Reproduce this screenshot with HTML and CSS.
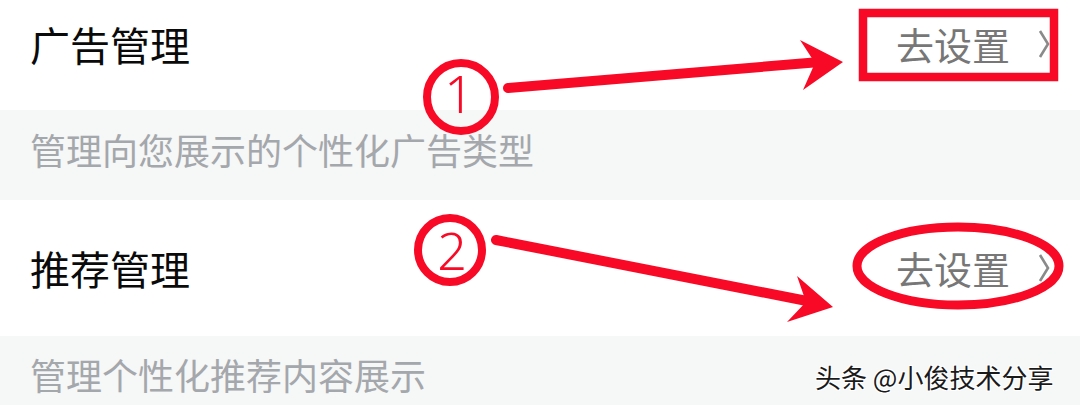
FILE: index.html
```html
<!DOCTYPE html>
<html lang="zh-CN">
<head>
<meta charset="utf-8">
<link rel="stylesheet" href="styles.css">
</head>
<body>
<div class="page">
  <div class="row row-first">
    <div class="title">广告管理</div>
    <div class="action"><span class="action-text">去设置</span><span class="chev"><svg width="12" height="28" viewBox="0 0 12 28"><path d="M2 1 L10 14 L2 27" fill="none" stroke="#8a8a8a" stroke-width="2.6"/></svg></span></div>
  </div>
  <div class="band band-first"><div class="desc">管理向您展示的个性化广告类型</div></div>
  <div class="row row-second">
    <div class="title">推荐管理</div>
    <div class="action"><span class="action-text">去设置</span><span class="chev"><svg width="12" height="28" viewBox="0 0 12 28"><path d="M2 1 L10 14 L2 27" fill="none" stroke="#8a8a8a" stroke-width="2.6"/></svg></span></div>
  </div>
  <div class="band band-second"><div class="desc">管理个性化推荐内容展示</div></div>

  <svg class="marks" width="1080" height="405" viewBox="0 0 1080 405">
    <g fill="none" stroke="#f80a26">
      <rect x="863" y="13" width="191" height="64" stroke-width="8.5"/>
      <circle cx="461" cy="97" r="34" stroke-width="8"/>
      <circle cx="450" cy="250" r="32" stroke-width="8"/>
      <ellipse cx="958" cy="266" rx="101" ry="39" stroke-width="9"/>
      <line x1="508" y1="88" x2="820" y2="62" stroke-width="10" stroke-linecap="round"/>
      <line x1="496" y1="240" x2="812" y2="302" stroke-width="10" stroke-linecap="round"/>
    </g>
    <g fill="#f80a26">
      <polygon points="800,40 843,62 803,90 815,63"/>
      <polygon points="797,276 833,307 787,322 806,302"/>
    </g>
    <text class="num" x="459" y="113" text-anchor="middle">1</text>
    <text class="num" x="452" y="270" text-anchor="middle">2</text>
  </svg>
  <div class="watermark">头条 @小俊技术分享</div>
</div>
</body>
</html>
```

FILE: styles.css
```css
html, body {
  margin: 0;
  padding: 0;
  background: #ffffff;
}
body {
  font-family: "Noto Sans CJK SC", "Noto Sans", sans-serif;
}
.page {
  position: relative;
  width: 1080px;
  height: 405px;
  overflow: hidden;
  display: flex;
  flex-direction: column;
}
.row {
  display: flex;
  align-items: center;
  justify-content: space-between;
  padding: 0 30px;
  background: #ffffff;
  box-sizing: border-box;
}
.row-first {
  height: 110px;
  padding-bottom: 22px;
}
.row-second {
  height: 136px;
}
.title {
  font-size: 40px;
  line-height: 1;
  color: #0a0a0a;
}
.action {
  display: flex;
  align-items: center;
  gap: 28px;
}
.action-text {
  font-size: 38px;
  line-height: 1;
  color: #777777;
}
.chev {
  display: flex;
}
.band {
  background: #f6f7f7;
  padding: 0 30px;
  box-sizing: border-box;
}
.band-first {
  height: 90px;
  padding-top: 21px;
}
.band-second {
  height: 69px;
  padding-top: 20px;
}
.desc {
  font-size: 36px;
  line-height: 1;
  color: #a4a7ab;
}
.marks {
  position: absolute;
  left: 0;
  top: 0;
}
.num {
  font-family: "Noto Sans", sans-serif;
  font-size: 52px;
  font-weight: 300;
  fill: #f80a26;
}
.watermark {
  position: absolute;
  left: 815px;
  top: 364px;
  font-size: 26px;
  line-height: 1;
  color: #1a1a1a;
  text-shadow: 1px 1px 0 #fff, -1px -1px 0 #fff, 1px -1px 0 #fff, -1px 1px 0 #fff;
}
```
